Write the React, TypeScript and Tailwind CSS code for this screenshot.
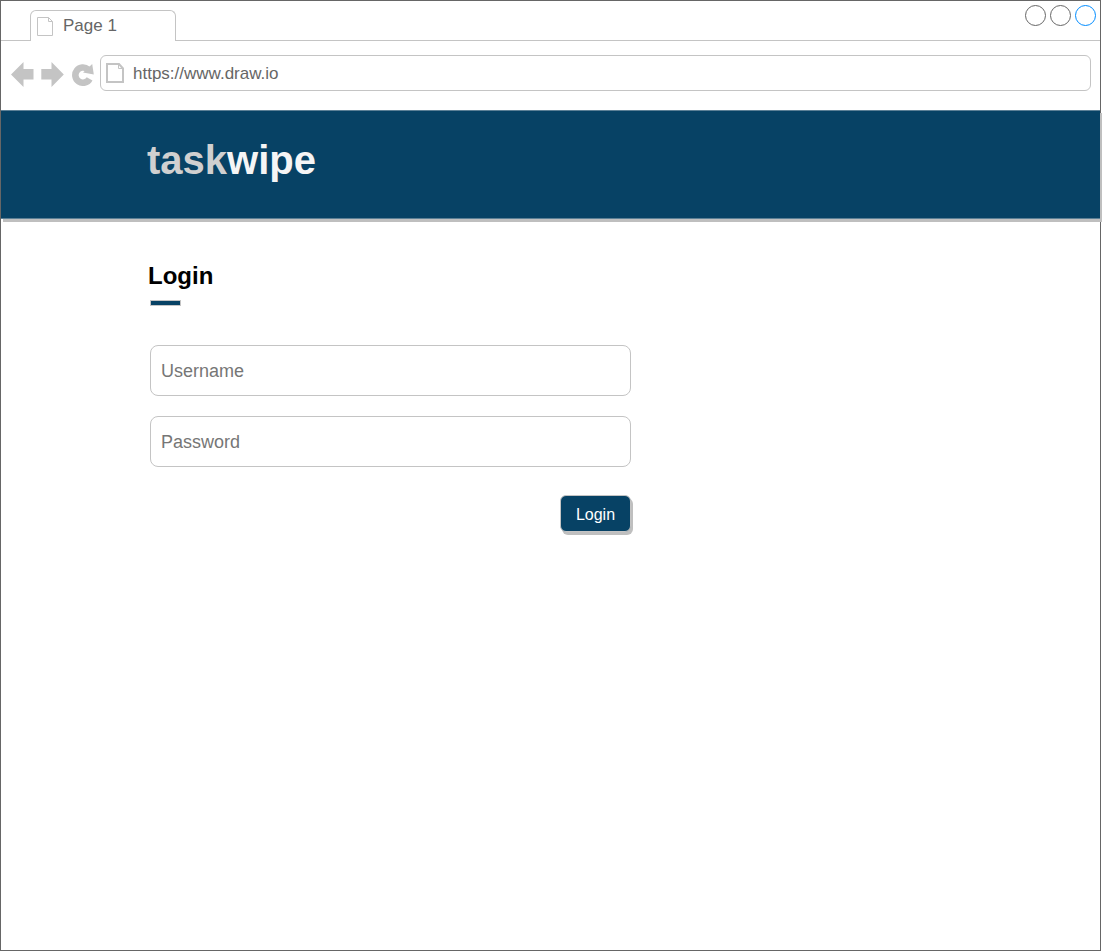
import React from "react";

type IconProps = { className?: string };

function BackIcon({ className }: IconProps) {
  return (
    <svg className={className} width="24" height="26" viewBox="0 0 24 26" fill="#c4c4c4" aria-hidden="true">
      <path d="M0 12.5 12.5 0V7H22.5V17.5H12.5V25Z" />
    </svg>
  );
}

function ForwardIcon({ className }: IconProps) {
  return (
    <svg className={className} width="24" height="26" viewBox="0 0 24 26" fill="#c4c4c4" aria-hidden="true">
      <path d="M22.8 12.5 10.5 0V7H0.3V17.5H10.5V25Z" />
    </svg>
  );
}

function ReloadIcon({ className }: IconProps) {
  return (
    <svg className={className} width="22" height="22" viewBox="0 0 22 22" fill="none" aria-hidden="true">
      <path d="M16 5.4A7.6 7.6 0 1 0 17.6 14.8" stroke="#c4c4c4" strokeWidth="6.6" />
      <path d="M20.2 0 21.8 10.4 11 8.6Z" fill="#c4c4c4" />
    </svg>
  );
}

function PageIcon({ bold = false }: { bold?: boolean }) {
  return bold ? (
    <svg width="18" height="20" viewBox="0 0 18 20" fill="none" stroke="#c4c4c4" aria-hidden="true">
      <path d="M1 1H13L17 5.5V19H1Z" strokeWidth="2" />
      <path d="M12.5 1V5.5H17" strokeWidth="1" />
    </svg>
  ) : (
    <svg width="17" height="20" viewBox="0 0 17 20" fill="none" stroke="#c4c4c4" aria-hidden="true">
      <path d="M0.5 1.5H11.5L15.5 5.5V19.5H0.5Z" />
      <path d="M11.5 1.5V5.5H15.5" />
    </svg>
  );
}

function TabStrip() {
  return (
    <div className="flex h-10 items-end justify-between border-b border-[#c4c4c4] pl-[29px] pr-1">
      <div className="-mb-px flex h-[31px] w-[146px] items-center gap-[9px] rounded-t-md border border-b-0 border-[#c4c4c4] bg-white pl-1.5 text-[17px] text-[#666666]">
        <PageIcon />
        <span>Page 1</span>
      </div>
      <div className="flex gap-1 self-start pt-1">
        <button type="button" aria-label="Minimize" className="size-[21px] rounded-full border border-[#666666]" />
        <button type="button" aria-label="Maximize" className="size-[21px] rounded-full border border-[#666666]" />
        <button type="button" aria-label="Close" className="size-[21px] rounded-full border border-[#008cff]" />
      </div>
    </div>
  );
}

function AddressBar() {
  return (
    <div className="flex h-[69px] items-start pl-[10px] pr-[9px] pt-[14px]">
      <div className="flex h-9 items-center pt-1">
        <button type="button" aria-label="Back" className="mr-1.5">
          <BackIcon />
        </button>
        <button type="button" aria-label="Forward" className="mr-[7px]">
          <ForwardIcon />
        </button>
        <button type="button" aria-label="Reload" className="mr-1.5">
          <ReloadIcon />
        </button>
      </div>
      <label className="flex h-9 flex-1 items-center gap-[9px] rounded-md border border-[#c4c4c4] pl-[5px]">
        <PageIcon bold />
        <input
          type="text"
          aria-label="Address"
          defaultValue="https://www.draw.io"
          className="h-full min-w-0 flex-1 bg-transparent pt-0.5 text-[17px] text-[#666666] outline-none"
        />
      </label>
    </div>
  );
}

function Field({ label, type }: { label: string; type: string }) {
  return (
    <input
      type={type}
      aria-label={label}
      placeholder={label}
      className="h-[51px] w-full rounded-lg border border-[#c4c4c4] px-[10px] pt-0.5 text-lg text-[#666666] outline-none placeholder:text-[#767676]"
    />
  );
}

export default function App() {
  return (
    <div className="flex min-h-screen flex-col bg-white pr-[2px] font-['Liberation_Sans',Arial,sans-serif]">
      <div className="flex flex-1 flex-col border border-[#666666]">
        <TabStrip />
        <AddressBar />
        <header className="border-y border-[#5c8096] bg-[#074265] px-[146px] pb-[34px] pt-[25px] shadow-[2px_3px_0_#bfbfbf]">
          <h1 className="text-[40px] font-bold leading-12 text-[#f5f5f5]">
            <span className="text-[#d0d0d0]">task</span>wipe
          </h1>
        </header>
        <main className="px-[149px] pt-[41px]">
          <form className="max-w-[481px]" onSubmit={(e) => e.preventDefault()}>
            <h2 className="-ml-0.5 text-2xl font-bold text-black">Login</h2>
            <div className="mt-2 h-1.5 w-[31px] border border-[#c4c4c4] bg-[#074265]" />
            <div className="mt-[39px] flex flex-col gap-5">
              <Field label="Username" type="text" />
              <Field label="Password" type="password" />
            </div>
            <div className="mt-7 flex justify-end">
              <button
                type="submit"
                className="h-[37px] w-[71px] rounded-md border border-[#c4c4c4] bg-[#074265] pt-0.5 text-base text-white shadow-[2px_3px_0_#bfbfbf]"
              >
                Login
              </button>
            </div>
          </form>
        </main>
      </div>
    </div>
  );
}
